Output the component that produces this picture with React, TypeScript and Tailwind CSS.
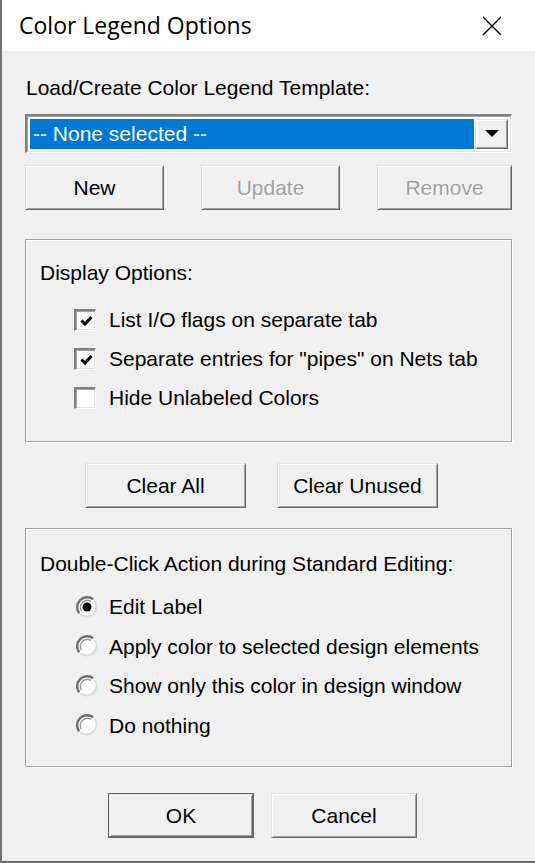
import React from 'react';

const raised =
  'border border-t-[#e3e3e3] border-l-[#e3e3e3] border-r-[#696969] border-b-[#696969] shadow-[inset_1px_1px_0_#ffffff,inset_-1px_-1px_0_#a0a0a0] bg-[#f0f0f0]';

const Button = ({
  label,
  disabled,
  isDefault,
  className = '',
}: {
  label: string;
  disabled?: boolean;
  isDefault?: boolean;
  className?: string;
}) => (
  <div
    className={`${isDefault ? 'border border-[#646464]' : ''} ${className} h-[45px] flex`}
  >
    <div
      className={`${raised} flex-1 flex items-center justify-center text-[21px] ${
        disabled ? 'text-[#a0a0a0] [text-shadow:1px_1px_0_#ffffff]' : 'text-black'
      }`}
    >
      {label}
    </div>
  </div>
);

const Checkbox = ({ checked, label }: { checked?: boolean; label: string }) => (
  <div className="flex items-center h-[39px]">
    <div className="w-[22px] h-[22px] border-t-2 border-l-2 border-t-[#808080] border-l-[#808080] border-r border-b border-r-white border-b-white ml-[48px]">
      <div className="w-full h-full border-t border-l border-[#a0a0a0] border-r-0 border-b-0 bg-white shadow-[inset_-1px_-1px_0_#e3e3e3] flex items-center justify-center">
        {checked && (
          <svg width="13" height="12" viewBox="0 0 13 12">
            <path d="M1.5 5.5 L5 9 L11.5 2" stroke="#000" strokeWidth="3" fill="none" />
          </svg>
        )}
      </div>
    </div>
    <span className="ml-[13px] text-[21px] text-black">{label}</span>
  </div>
);

const Radio = ({ checked, label }: { checked?: boolean; label: string }) => (
  <div className="flex items-center h-[39.5px]">
    <svg width="22" height="22" viewBox="0 0 22 22" className="ml-[50px]">
      <circle cx="11" cy="11" r="10" fill="#ffffff" />
      <path d="M3.2 17.2 A10 10 0 0 1 17.2 3.2" stroke="#6e6e6e" strokeWidth="2.4" fill="none" />
      <path d="M5.4 15 A7 7 0 0 1 15 5.4" stroke="#9a9a9a" strokeWidth="1.4" fill="none" />
      <path d="M18.5 4.5 A10 10 0 0 1 4.5 18.5" stroke="#dcdcdc" strokeWidth="2" fill="none" />
      {checked && <circle cx="11" cy="11" r="4.5" fill="#000" />}
    </svg>
    <span className="ml-[11px] text-[21px] text-black">{label}</span>
  </div>
);

const GroupBox = ({ children, className = '' }: { children: React.ReactNode; className?: string }) => (
  <div
    className={`border border-[#a0a0a0] shadow-[inset_1px_1px_0_#ffffff,1px_1px_0_#ffffff] ${className}`}
  >
    {children}
  </div>
);

const App = () => {
  return (
    <div
      className="w-[535px] h-[863px] bg-[#f0f0f0] border-l-2 border-b-2 border-[#707070] flex flex-col overflow-hidden"
      style={{ fontFamily: '"Liberation Sans", Arial, sans-serif' }}
    >
      <div className="h-[51px] bg-white flex items-center justify-between pl-[17px] pr-[33px] shrink-0">
        <span
          className="text-[23px] text-black"
          style={{ fontFamily: '"Open Sans", "Noto Sans", sans-serif' }}
        >
          Color Legend Options
        </span>
        <svg width="20" height="20" viewBox="0 0 20 20">
          <path d="M1 1 L19 19 M19 1 L1 19" stroke="#000" strokeWidth="1.4" />
        </svg>
      </div>

      <div className="pl-[23px] pr-[23px] flex flex-col">
        <div className="mt-[25px] h-[24px] leading-[24px] text-[21px] text-black pl-[1px]">
          Load/Create Color Legend Template:
        </div>

        <div className="mt-[14px] h-[39px] border-t-2 border-l-2 border-t-[#808080] border-l-[#808080] border-r border-b border-r-white border-b-white flex">
          <div className="flex-1 flex border border-[#a0a0a0] border-r-[#e3e3e3] border-b-[#e3e3e3] bg-white p-[2px]">
            <div className="flex-1 bg-[#0078d7] text-white text-[21px] flex items-center pl-[3px]">
              -- None selected --
            </div>
            <div className={`${raised} w-[33px] ml-[1px] flex items-center justify-center`}>
              <svg width="14" height="8" viewBox="0 0 14 8">
                <path d="M0 0 H14 L7 7 Z" fill="#000" />
              </svg>
            </div>
          </div>
        </div>

        <div className="mt-[12px] flex justify-between">
          <Button label="New" className="w-[139px]" />
          <Button label="Update" disabled className="w-[139px]" />
          <Button label="Remove" disabled className="w-[135px]" />
        </div>

        <GroupBox className="mt-[29px] h-[203px] flex flex-col">
          <div className="mt-[21px] ml-[14px] text-[21px] leading-[24px] text-black">Display Options:</div>
          <div className="mt-[15px] flex flex-col">
            <Checkbox checked label="List I/O flags on separate tab" />
            <Checkbox checked label='Separate entries for "pipes" on Nets tab' />
            <Checkbox label="Hide Unlabeled Colors" />
          </div>
        </GroupBox>

        <div className="mt-[21px] flex justify-center gap-[31px] pr-[14px]">
          <Button label="Clear All" className="w-[161px]" />
          <Button label="Clear Unused" className="w-[161px]" />
        </div>

        <GroupBox className="mt-[20px] h-[239px] flex flex-col">
          <div className="mt-[23px] ml-[14px] text-[21px] leading-[24px] text-black">
            Double-Click Action during Standard Editing:
          </div>
          <div className="mt-[11px] flex flex-col">
            <Radio checked label="Edit Label" />
            <Radio label="Apply color to selected design elements" />
            <Radio label="Show only this color in design window" />
            <Radio label="Do nothing" />
          </div>
        </GroupBox>

        <div className="mt-[26px] flex justify-center gap-[17px] pr-[12px]">
          <Button label="OK" isDefault className="w-[146px]" />
          <Button label="Cancel" className="w-[146px]" />
        </div>
      </div>
    </div>
  );
};

export default App;
